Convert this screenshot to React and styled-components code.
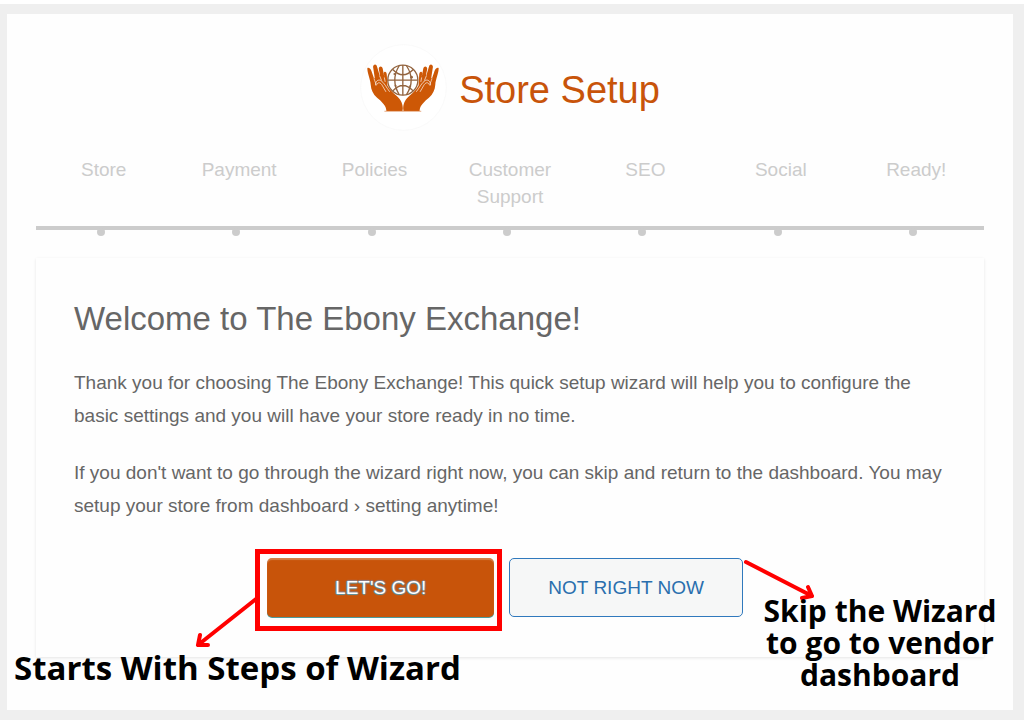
import React from 'react';
import styled, { createGlobalStyle } from 'styled-components';

const GlobalStyle = createGlobalStyle`
  * {
    box-sizing: border-box;
  }

  body {
    margin: 0;
    background: #fff;
    font-family: "Liberation Sans", Arial, sans-serif;
    font-size: 19px;
    color: #666;
  }
`;

const Backdrop = styled.div`
  margin-top: 4px;
  padding: 10px 11px 10px 7px;
  background: #efefef;
`;

const Page = styled.main`
  position: relative;
  padding: 30px 29px 53px;
  background: #fefefe;
`;

const Header = styled.header`
  display: flex;
  align-items: center;
  justify-content: center;
  gap: 12px;
`;

const Logo = styled.svg`
  width: 87px;
  height: 87px;
`;

const Brand = styled.h1`
  margin: 0;
  padding-top: 4px;
  font-size: 38px;
  font-weight: 400;
  line-height: 44px;
  color: #c8540a;
`;

const Steps = styled.ol`
  display: flex;
  list-style: none;
  margin: 25px 0 28px;
  padding: 0;
`;

const Step = styled.li`
  position: relative;
  flex: 1;
  padding: 0 14px 16px;
  border-bottom: 4px solid #ccc;
  line-height: 27px;
  text-align: center;
  color: #ccc;

  &::after {
    content: '';
    position: absolute;
    left: 50%;
    bottom: -10px;
    width: 8px;
    height: 8px;
    margin-left: -7px;
    border-radius: 50%;
    background: #ccc;
  }
`;

const Card = styled.section`
  padding: 39px 38px 40px;
  box-shadow: 0 1px 3px rgba(0, 0, 0, 0.1);
`;

const Title = styled.h2`
  margin: 0 0 25px;
  font-size: 33px;
  font-weight: 400;
  line-height: 44px;
`;

const Text = styled.p`
  margin: 0 0 24px;
  line-height: 33px;
`;

const Actions = styled.div`
  display: flex;
  justify-content: center;
  gap: 15px;
  margin-top: 36px;
  padding-right: 10px;
`;

const ActionItem = styled.div`
  position: relative;
`;

const Button = styled.button`
  height: 59px;
  padding: 0 38px;
  border: 1px solid #3079bd;
  border-radius: 5px;
  background: #f6f7f7;
  font-family: inherit;
  font-size: 19px;
  color: #2a6fae;
  cursor: pointer;
`;

const PrimaryButton = styled(Button)`
  padding: 0 68px;
  border: 0;
  background: #c8540a;
  color: #fff;
  text-shadow: 0 -1px 1px #8b7f8a, 1px 0 1px #8b7f8a, 0 1px 1px #4f9cae, -1px 0 1px #4f9cae;
  box-shadow: inset 0 2px 1px rgba(255, 255, 255, 0.25), 0 1px 0 #4c9c9c;
`;

const Highlight = styled.span`
  position: absolute;
  inset: -9px -8px -14px -12px;
  border: 5px solid #f00;
  pointer-events: none;
`;

const Arrow = styled.svg`
  position: absolute;
  top: 0;
  left: ${props => props.$left};
  overflow: visible;
  fill: none;
  stroke: #f00;
  stroke-width: 4;
  stroke-linecap: round;
  stroke-linejoin: round;
  pointer-events: none;
`;

const Note = styled.p`
  position: absolute;
  margin: 0;
  font-family: "Open Sans", "Noto Sans", sans-serif;
  font-weight: 700;
  color: #000;
`;

const StartNote = styled(Note)`
  left: 7px;
  bottom: 21px;
  font-size: 33px;
  line-height: 42px;
  white-space: nowrap;
`;

const SkipNote = styled(Note)`
  right: 11px;
  bottom: 19px;
  width: 244px;
  font-size: 30px;
  line-height: 32px;
  text-align: center;
`;

const steps = ['Store', 'Payment', 'Policies', 'Customer Support', 'SEO', 'Social', 'Ready!'];

const Hand = () => (
  <>
    <path
      fill="#cd5806"
      d="M54 101 C60 97 66 106 68 115 L74 132 L76 130 L71 97 C73 88 81 88 83 97 L91 124 L92 123 L88 103 C90 93 98 95 100 103 L105 130 L103 116 C105 108 112 112 112 120 L114 153 C120 165 129 173 141 184 C152 193 159 204 160 221 L159 229 L111 229 C110 213 98 203 83 190 C71 179 65 166 64 151 C63 134 53 115 54 101 Z"
    />
    <path
      fill="none"
      stroke="#fefefe"
      strokeWidth="2"
      strokeLinecap="round"
      d="M74 133 C76 141 80 145 80 152 M91 125 L96 137 M105 130 L107 141 M79 151 C77 141 86 134 94 138 C104 144 110 158 120 171 M83 149 C86 141 94 145 98 152 L109 171"
    />
  </>
);

const BrandLogo = () => (
  <Logo viewBox="32 29 260 260" role="img" aria-label="The Ebony Exchange">
    <circle cx="162" cy="159" r="128" fill="#fff" stroke="#f7f7f7" strokeWidth="2" />
    <g fill="none" stroke="#93643f" strokeWidth="4">
      <circle cx="160" cy="137" r="45" />
      <path d="M160 92 V182 M115 137 H205 M130 105 Q160 137 191 105 M130 169 Q160 137 191 169" />
      <path d="M149 94 Q123 137 149 180 M171 94 Q199 137 171 180" />
    </g>
    <g fill="#93643f">
      <circle cx="135" cy="119" r="3" />
      <circle cx="186" cy="128" r="4" />
      <circle cx="138" cy="154" r="3" />
      <circle cx="182" cy="155" r="3" />
    </g>
    <Hand />
    <g transform="translate(321 0) scale(-1 1)">
      <Hand />
    </g>
    <path d="M105 230 H215" stroke="#d98145" strokeWidth="2" />
  </Logo>
);

const App = () => {
  return (
    <>
      <GlobalStyle />
      <Backdrop>
        <Page>
          <Header>
            <BrandLogo />
            <Brand>Store Setup</Brand>
          </Header>
          <Steps>
            {steps.map(step => (
              <Step key={step}>{step}</Step>
            ))}
          </Steps>
          <Card>
            <Title>Welcome to The Ebony Exchange!</Title>
            <Text>
              Thank you for choosing The Ebony Exchange! This quick setup wizard will help you to
              configure the basic settings and you will have your store ready in no time.
            </Text>
            <Text>
              If you don&#39;t want to go through the wizard right now, you can skip and return to
              the dashboard. You may setup your store from dashboard › setting anytime!
            </Text>
            <Actions>
              <ActionItem>
                <PrimaryButton type="button">LET&#39;S GO!</PrimaryButton>
                <Highlight />
                <Arrow $left="-72px" width="64" height="92" aria-hidden="true">
                  <path d="M61 41 L3 87 M5 77 L3 87 L13 87" />
                </Arrow>
              </ActionItem>
              <ActionItem>
                <Button type="button">NOT RIGHT NOW</Button>
                <Arrow $left="100%" width="76" height="44" aria-hidden="true">
                  <path d="M3 4 L69 38 M65 29 L69 38 L59 40" />
                </Arrow>
              </ActionItem>
            </Actions>
          </Card>
          <StartNote>Starts With Steps of Wizard</StartNote>
          <SkipNote>Skip the Wizard to go to vendor dashboard</SkipNote>
        </Page>
      </Backdrop>
    </>
  );
};

export default App;
